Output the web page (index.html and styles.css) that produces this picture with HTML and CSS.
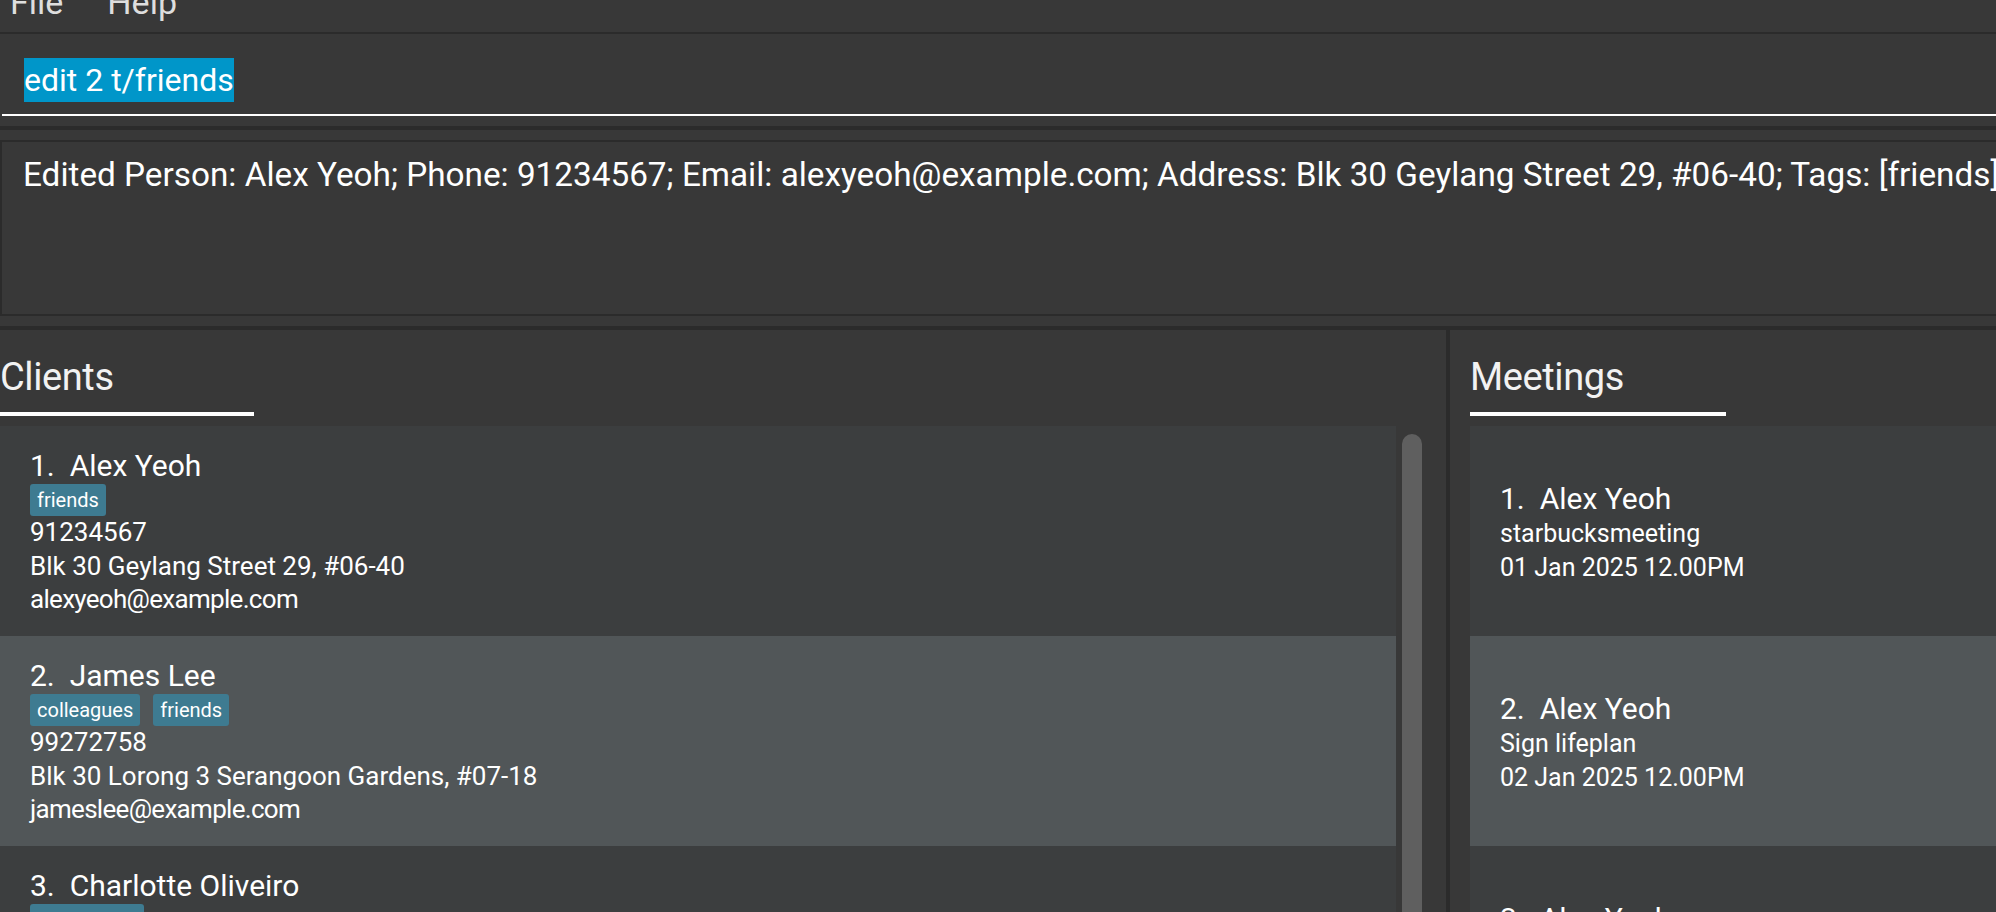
FILE: index.html
```html
<!DOCTYPE html>
<html lang="en">
<head>
<meta charset="utf-8">
<title>Address App</title>
<link rel="stylesheet" href="styles.css">
</head>
<body>
<div class="app">
  <div class="menubar">
    <span class="menu-item">File</span>
    <span class="menu-item">Help</span>
  </div>

  <div class="command-pane">
    <div class="command-field"><span class="selection">edit 2 t/friends</span></div>
  </div>

  <div class="result-pane">
    <div class="result-box">Edited Person: Alex Yeoh; Phone: 91234567; Email: alexyeoh@example.com; Address: Blk 30 Geylang Street 29, #06-40; Tags: [friends]</div>
  </div>

  <div class="main">
    <section class="panel clients">
      <div class="panel-title">Clients</div>
      <div class="title-bar"></div>
      <div class="list-wrap">
        <div class="list">
          <div class="card">
            <div class="name">1.  Alex Yeoh</div>
            <div class="tags"><span class="tag">friends</span></div>
            <div class="detail">91234567</div>
            <div class="detail">Blk 30 Geylang Street 29, #06-40</div>
            <div class="detail email">alexyeoh@example.com</div>
          </div>
          <div class="card">
            <div class="name">2.  James Lee</div>
            <div class="tags"><span class="tag">colleagues</span><span class="tag">friends</span></div>
            <div class="detail">99272758</div>
            <div class="detail">Blk 30 Lorong 3 Serangoon Gardens, #07-18</div>
            <div class="detail email">jameslee@example.com</div>
          </div>
          <div class="card">
            <div class="name">3.  Charlotte Oliveiro</div>
            <div class="tags"><span class="tag">neighbours</span></div>
            <div class="detail">93210283</div>
            <div class="detail">Blk 11 Ang Mo Kio Street 74, #11-04</div>
            <div class="detail email">charlotte@example.com</div>
          </div>
        </div>
        <div class="scroll"><div class="thumb"></div></div>
      </div>
    </section>

    <div class="divider"></div>

    <section class="panel meetings">
      <div class="panel-title">Meetings</div>
      <div class="title-bar wide"></div>
      <div class="list">
        <div class="card meeting">
          <div class="name">1.  Alex Yeoh</div>
          <div class="mdetail">starbucksmeeting</div>
          <div class="mdetail">01 Jan 2025 12.00PM</div>
        </div>
        <div class="card meeting">
          <div class="name">2.  Alex Yeoh</div>
          <div class="mdetail">Sign lifeplan</div>
          <div class="mdetail">02 Jan 2025 12.00PM</div>
        </div>
        <div class="card meeting">
          <div class="name">3.  Alex Yeoh</div>
          <div class="mdetail">Review portfolio</div>
          <div class="mdetail">03 Jan 2025 12.00PM</div>
        </div>
      </div>
    </section>
  </div>
</div>
</body>
</html>
```
FILE: styles.css
```css
html, body {
  margin: 0;
  padding: 0;
}

body {
  width: 1996px;
  height: 912px;
  overflow: hidden;
  background: #383838;
  color: #ffffff;
  font-family: Roboto, "Liberation Sans", sans-serif;
}

.app {
  height: 912px;
  overflow: hidden;
}

/* menu bar */
.menubar {
  height: 32px;
  border-bottom: 2px solid #2b2b2b;
  display: flex;
  gap: 44px;
  padding-left: 10px;
  overflow: hidden;
  font-size: 34px;
  color: #dedede;
}

.menu-item {
  line-height: 32px;
  margin-top: -14px;
}

/* command box */
.command-pane {
  height: 92px;
  padding-left: 2px;
  border-bottom: 4px solid #2b2b2b;
}

.command-field {
  padding: 24px 0 12px 22px;
  border-bottom: 2px solid #ffffff;
  height: 44px;
}

.selection {
  display: inline-block;
  background: #0096c9;
  color: #ffffff;
  font-size: 32px;
  line-height: 44px;
  height: 44px;
}

/* result box */
.result-pane {
  padding: 10px 0;
  border-bottom: 4px solid #2b2b2b;
  overflow: hidden;
}

.result-box {
  height: 159px;
  margin-right: -20px;
  border: 2px solid #2b2b2b;
  padding: 13px 0 0 21px;
  font-size: 33.3px;
  line-height: 40px;
  white-space: nowrap;
  overflow: hidden;
}

/* main panels */
.main {
  display: flex;
  height: 582px;
  overflow: hidden;
}

.clients {
  width: 1446px;
  flex-shrink: 0;
}

.divider {
  width: 4px;
  flex-shrink: 0;
  background: #2b2b2b;
}

.meetings {
  flex: 1;
  padding-left: 20px;
  overflow: hidden;
}

.panel-title {
  font-size: 38px;
  line-height: 46px;
  padding-top: 24px;
  letter-spacing: -0.4px;
  color: #f2f2f2;
}

.title-bar {
  width: 254px;
  height: 4px;
  background: #ffffff;
  margin: 12px 0 10px;
}

.title-bar.wide {
  width: 256px;
}

.list-wrap {
  display: flex;
}

.clients .list {
  width: 1396px;
  flex-shrink: 0;
}

.meetings .list {
  width: 600px;
}

.scroll {
  width: 44px;
  padding: 8px 0 0 6px;
}

.thumb {
  width: 20px;
  height: 600px;
  border-radius: 10px;
  background: #5f5f5f;
}

/* cards */
.card {
  box-sizing: border-box;
  height: 210px;
  padding: 22px 0 0 30px;
  background: #3c3e3f;
}

.card:nth-child(even) {
  background: #515658;
}

.card.meeting {
  padding: 55px 0 0 30px;
}

.name {
  font-size: 30px;
  line-height: 36px;
  white-space: pre;
}

.tags {
  display: flex;
  gap: 13px;
  height: 32px;
}

.tag {
  font-size: 20px;
  line-height: 32px;
  height: 32px;
  padding: 0 7px;
  background: #3e7b91;
  border-radius: 3px;
}

.detail {
  font-size: 26px;
  line-height: 33.5px;
}

.detail.email {
  letter-spacing: -0.7px;
}

.mdetail {
  font-size: 25px;
  line-height: 34px;
}
```
